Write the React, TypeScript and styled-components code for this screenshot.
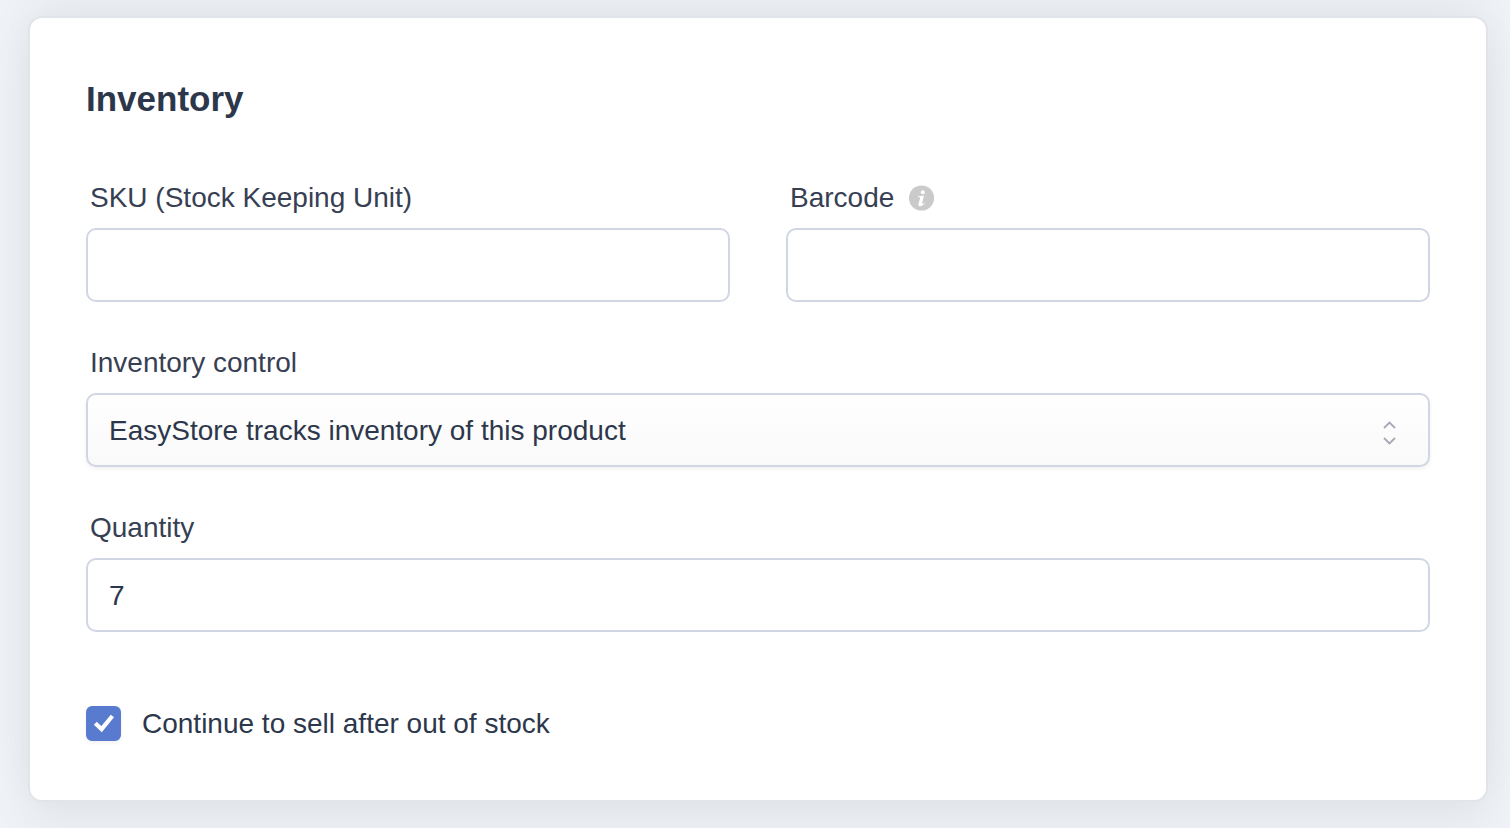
import React, { useState } from 'react';
import styled, { createGlobalStyle } from 'styled-components';

const GlobalStyle = createGlobalStyle`
  *, *::before, *::after { box-sizing: border-box; }
  body {
    margin: 0;
    background: #eff2f7;
    color: #2d374b;
    font-family: "Helvetica Neue", "Liberation Sans", Arial, sans-serif;
    font-size: 28px;
    line-height: 34px;
  }
`;

const Page = styled.main`
  padding: 16px 22px 26px 28px;
`;

const Card = styled.section`
  padding: 56px 56px 59px;
  background: #fff;
  border: 2px solid #e1e5ea;
  border-radius: 14px;
  box-shadow: 0 -20px 44px rgba(0, 0, 0, 0.045), 0 20px 44px rgba(0, 0, 0, 0.06);
`;

const Title = styled.h2`
  margin: 3px 0 60px;
  font-size: 35px;
  line-height: 44px;
  font-weight: 700;
`;

const Form = styled.form`
  display: grid;
  grid-template-columns: 1fr 1fr;
  gap: 44px 56px;
`;

const Field = styled.div<{ $wide?: boolean }>`
  display: flex;
  flex-direction: column;
  gap: 13px;
  grid-column: ${(p) => (p.$wide ? '1 / -1' : 'auto')};
`;

const LabelRow = styled.div`
  display: flex;
  align-items: center;
  gap: 15px;
  padding-left: 4px;
`;

const Label = styled.label`
  color: #374053;
`;

const InfoButton = styled.button`
  display: flex;
  padding: 0;
  border: 0;
  background: none;
  cursor: help;
`;

const Input = styled.input`
  width: 100%;
  height: 74px;
  padding: 2px 21px 0;
  border: 2px solid #d1d6e4;
  border-radius: 10px;
  background: #fff;
  color: inherit;
  font: inherit;
`;

const SelectWrap = styled.div`
  position: relative;
`;

const Select = styled.select`
  display: block;
  width: 100%;
  height: 74px;
  padding: 2px 80px 0 21px;
  appearance: none;
  border: 2px solid #d1d6e4;
  border-radius: 10px;
  background: linear-gradient(#fff, #f9f9f9);
  box-shadow: 0 2px 4px rgba(0, 0, 0, 0.06);
  color: inherit;
  font: inherit;
`;

const SelectArrows = styled.svg`
  position: absolute;
  top: 27px;
  right: 34px;
  pointer-events: none;
`;

const CheckRow = styled.label`
  display: flex;
  align-items: center;
  gap: 21px;
  grid-column: 1 / -1;
  margin-top: 30px;
`;

const CheckBox = styled.span`
  position: relative;
  display: flex;
  width: 35px;
  height: 35px;
`;

const CheckInput = styled.input`
  width: 35px;
  height: 35px;
  margin: 0;
  appearance: none;
  border: 2px solid #d1d6e4;
  border-radius: 6px;
  box-shadow: 0 2px 4px rgba(0, 0, 0, 0.06);
  &:checked {
    border-color: #587acf;
    background: #587acf;
  }
`;

const CheckMark = styled.svg`
  position: absolute;
  inset: 0;
  pointer-events: none;
`;

export default function App() {
  const [quantity, setQuantity] = useState('7');
  const [oversell, setOversell] = useState(true);

  return (
    <>
      <GlobalStyle />
      <Page>
        <Card>
          <Title>Inventory</Title>
          <Form>
            <Field>
              <LabelRow>
                <Label htmlFor="sku">SKU (Stock Keeping Unit)</Label>
              </LabelRow>
              <Input id="sku" type="text" />
            </Field>
            <Field>
              <LabelRow>
                <Label htmlFor="barcode">Barcode</Label>
                <InfoButton type="button" aria-label="About barcodes">
                  <svg width="26" height="26" viewBox="0 0 26 26">
                    <circle cx="12.5" cy="13" r="12.6" fill="#cacaca" />
                    <circle cx="13.8" cy="7.2" r="2" fill="#fff" />
                    <path
                      d="M9 11.3C11.2 11.1 12.8 10.8 15 10.4L13 18.4C12.8 19.3 13.5 19.3 15.1 17.6L15.7 18.1C14.3 20.2 13 21.2 11.2 21.2C9.4 21.2 9.2 20.1 9.5 18.8L11 13.4C11.2 12.5 10.6 12.2 9 12.1Z"
                      fill="#fff"
                    />
                  </svg>
                </InfoButton>
              </LabelRow>
              <Input id="barcode" type="text" />
            </Field>
            <Field $wide>
              <LabelRow>
                <Label htmlFor="control">Inventory control</Label>
              </LabelRow>
              <SelectWrap>
                <Select id="control">
                  <option>EasyStore tracks inventory of this product</option>
                </Select>
                <SelectArrows width="14" height="26" viewBox="0 0 14 26" fill="none" stroke="#a5a9b8" strokeWidth="1.8">
                  <path d="M2 8L7.5 2.5L13 8M2 18L7.5 23.5L13 18" />
                </SelectArrows>
              </SelectWrap>
            </Field>
            <Field $wide>
              <LabelRow>
                <Label htmlFor="quantity">Quantity</Label>
              </LabelRow>
              <Input
                id="quantity"
                type="text"
                inputMode="numeric"
                value={quantity}
                onChange={(e) => setQuantity(e.target.value)}
              />
            </Field>
            <CheckRow>
              <CheckBox>
                <CheckInput
                  type="checkbox"
                  checked={oversell}
                  onChange={(e) => setOversell(e.target.checked)}
                />
                {oversell && (
                  <CheckMark width="35" height="35" viewBox="0 0 35 35" fill="none">
                    <path d="M9.3 17.3L15.6 23.2L26.4 10" stroke="#fff" strokeWidth="4.2" />
                  </CheckMark>
                )}
              </CheckBox>
              Continue to sell after out of stock
            </CheckRow>
          </Form>
        </Card>
      </Page>
    </>
  );
}
